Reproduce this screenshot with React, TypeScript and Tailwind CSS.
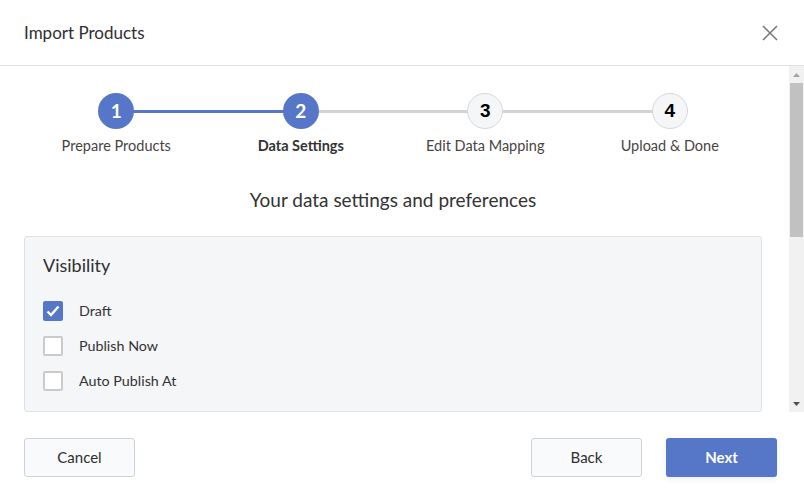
import { FC } from "react";

const steps = [
  { n: 1, label: "Prepare Products", state: "done" },
  { n: 2, label: "Data Settings", state: "active" },
  { n: 3, label: "Edit Data Mapping", state: "todo" },
  { n: 4, label: "Upload & Done", state: "todo" },
];

const options = [
  { label: "Draft", checked: true },
  { label: "Publish Now", checked: false },
  { label: "Auto Publish At", checked: false },
];

const Step: FC<{ n: number; label: string; state: string; index: number }> = ({
  n,
  label,
  state,
  index,
}) => {
  const filled = state !== "todo";
  return (
    <div className="relative flex flex-col items-center">
      {/* connector to the left */}
      {index > 0 && (
        <div
          className={
            "absolute top-[17px] right-1/2 w-full h-[3px] " +
            (filled ? "bg-[#5676c8]" : "bg-[#d3d3d3]")
          }
        />
      )}
      <div
        className={
          "relative z-10 flex h-9 w-9 items-center justify-center rounded-full " +
          (filled
            ? "bg-[#5676c8] text-white font-['Lato'] font-bold text-[19px]"
            : "bg-[#f4f6f8] border border-[#d5d9de] text-black font-['Liberation_Sans'] font-bold text-[19px]")
        }
      >
        {n}
      </div>
      <div
        className={
          "mt-[7px] text-[14.5px] leading-5 " +
          (state === "active" ? "font-bold text-[#333]" : "text-[#4a4440]")
        }
      >
        {label}
      </div>
    </div>
  );
};

const Checkbox: FC<{ checked: boolean }> = ({ checked }) =>
  checked ? (
    <span className="flex h-5 w-5 items-center justify-center rounded-[2px] bg-[#5676c8]">
      <svg width="14" height="12" viewBox="0 0 14 12" fill="none">
        <path d="M1.5 6.5 L5 10 L12.5 1.5" stroke="white" strokeWidth="2.4" />
      </svg>
    </span>
  ) : (
    <span className="block h-5 w-5 rounded-[2px] border-2 border-[#cbcbcb] bg-white" />
  );

export default function App() {
  return (
    <div className="h-[493px] w-[804px] overflow-hidden bg-white font-['Lato',sans-serif] text-[#333]">
      {/* header */}
      <div className="flex h-[66px] items-center justify-between border-b border-[#e2e2e2] pl-6 pr-[26px]">
        <h2 className="text-[17px] text-[#2f2f2f]">Import Products</h2>
        <svg width="16" height="16" viewBox="0 0 16 16" fill="none">
          <path d="M1 1 L15 15 M15 1 L1 15" stroke="#7a7a7a" strokeWidth="1.6" />
        </svg>
      </div>

      {/* body */}
      <div className="flex h-[346px] overflow-hidden">
        <div className="flex-1 pl-6 pr-[27px] pt-[27px]">
          <div className="grid grid-cols-4">
            {steps.map((s, i) => (
              <Step key={s.n} {...s} index={i} />
            ))}
          </div>

          <h3 className="mt-[31px] text-center text-[19px] leading-[26px] text-[#333]">
            Your data settings and preferences
          </h3>

          <div className="mt-[23px] h-[176px] rounded-[3px] border border-[#dde1e6] bg-[#f5f6f8] px-[18px] pt-4">
            <div className="text-[18px] leading-6 text-[#2f2f2f]">Visibility</div>
            <div className="mt-6 flex flex-col gap-[15px]">
              {options.map((o) => (
                <label
                  key={o.label}
                  className="flex h-5 items-center gap-4 text-[14.3px] leading-5 text-[#333]"
                >
                  <Checkbox checked={o.checked} />
                  {o.label}
                </label>
              ))}
            </div>
          </div>
        </div>

        {/* scrollbar */}
        <div className="flex w-[15px] flex-col bg-[#f1f1f1]">
          <div className="flex h-[17px] items-center justify-center">
            <svg width="7" height="4" viewBox="0 0 7 4">
              <path d="M0 4 L3.5 0 L7 4 Z" fill="#a3a3a3" />
            </svg>
          </div>
          <div className="mx-auto h-[154px] w-[13px] bg-[#c1c1c1]" />
          <div className="flex-1" />
          <div className="flex h-[17px] items-center justify-center">
            <svg width="7" height="4" viewBox="0 0 7 4">
              <path d="M0 0 L7 0 L3.5 4 Z" fill="#505050" />
            </svg>
          </div>
        </div>
      </div>

      {/* footer */}
      <div className="flex items-center justify-between pl-6 pr-[27px] pt-[26px]">
        <button className="h-[39px] w-[111px] rounded-[3px] border border-[#cdd2d8] bg-[#f9fafb] text-[15px] text-[#2f2f2f]">
          Cancel
        </button>
        <div className="flex gap-6">
          <button className="h-[39px] w-[111px] rounded-[3px] border border-[#cdd2d8] bg-[#f9fafb] text-[15px] text-[#2f2f2f]">
            Back
          </button>
          <button className="h-[39px] w-[111px] rounded-[3px] bg-[#5676c8] text-[15px] font-bold text-white shadow-[0_2px_6px_rgba(0,0,0,0.08)]">
            Next
          </button>
        </div>
      </div>
    </div>
  );
}
